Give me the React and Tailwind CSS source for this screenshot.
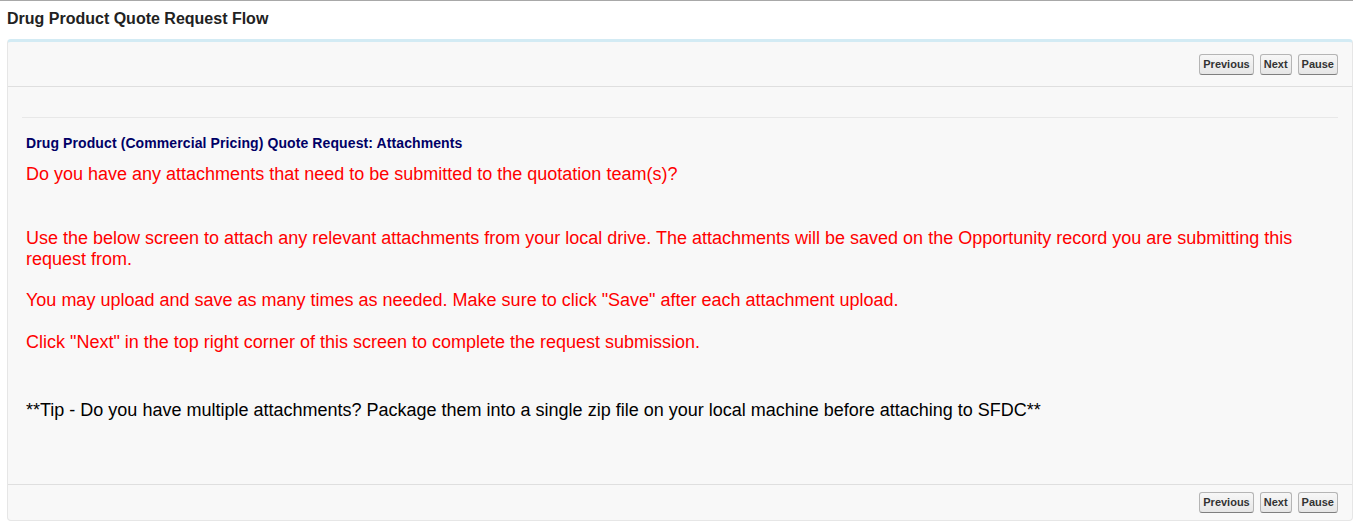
import React from 'react';

function Btn({ children }) {
  return (
    <button className="h-[21px] px-[3px] rounded-[3px] border border-[#b5b5b5] border-b-[#7f7f7f] bg-gradient-to-b from-[#f7f7f7] to-[#e6e6e6] text-[11px] font-bold text-[#333] leading-none">
      {children}
    </button>
  );
}

function ButtonBar() {
  return (
    <div className="flex justify-end gap-[6px]">
      <Btn>Previous</Btn>
      <Btn>Next</Btn>
      <Btn>Pause</Btn>
    </div>
  );
}

export default function App() {
  return (
    <div className="min-h-screen bg-white border-t border-[#a8a8a8] font-['Liberation_Sans',Arial,sans-serif]">
      <h2 className="px-[7px] pt-[9px] pb-[11px] text-[16px] leading-[18px] font-bold text-[#222]">
        Drug Product Quote Request Flow
      </h2>

      <div className="ml-[7px] bg-[#f8f8f8] border border-[#e6e6e6] border-t-[3px] border-t-[#d3ebf4] rounded-[4px]">
        <div className="h-[45px] flex items-center justify-end pr-[14px] border-b border-[#dfdfdf]">
          <ButtonBar />
        </div>

        <div className="px-[14px] pt-[30px]">
          <div className="border-t border-[#e8e8e8]" />
          <div className="px-[4px] pt-[17px]">
            <h3 className="text-[14px] leading-[17px] tracking-[0.1px] font-bold text-[#000066]">
              Drug Product (Commercial Pricing) Quote Request: Attachments
            </h3>
            <div className="mt-[12px] text-[18px] leading-[21px] text-[#ff0000]">
              <p>Do you have any attachments that need to be submitted to the quotation team(s)?</p>
              <p className="mt-[43px]">
                Use the below screen to attach any relevant attachments from your local drive. The attachments will be saved on the Opportunity record you are submitting this request from.
              </p>
              <p className="mt-[20px]">
                You may upload and save as many times as needed. Make sure to click "Save" after each attachment upload.
              </p>
              <p className="mt-[21px]">
                Click "Next" in the top right corner of this screen to complete the request submission.
              </p>
            </div>
            <p className="mt-[47px] text-[18px] leading-[21px] text-black">
              **Tip - Do you have multiple attachments? Package them into a single zip file on your local machine before attaching to SFDC**
            </p>
          </div>
          <div className="h-[63px]" />
        </div>

        <div className="h-[36px] flex items-center justify-end pr-[14px] border-t border-[#dfdfdf]">
          <ButtonBar />
        </div>
      </div>
    </div>
  );
}
